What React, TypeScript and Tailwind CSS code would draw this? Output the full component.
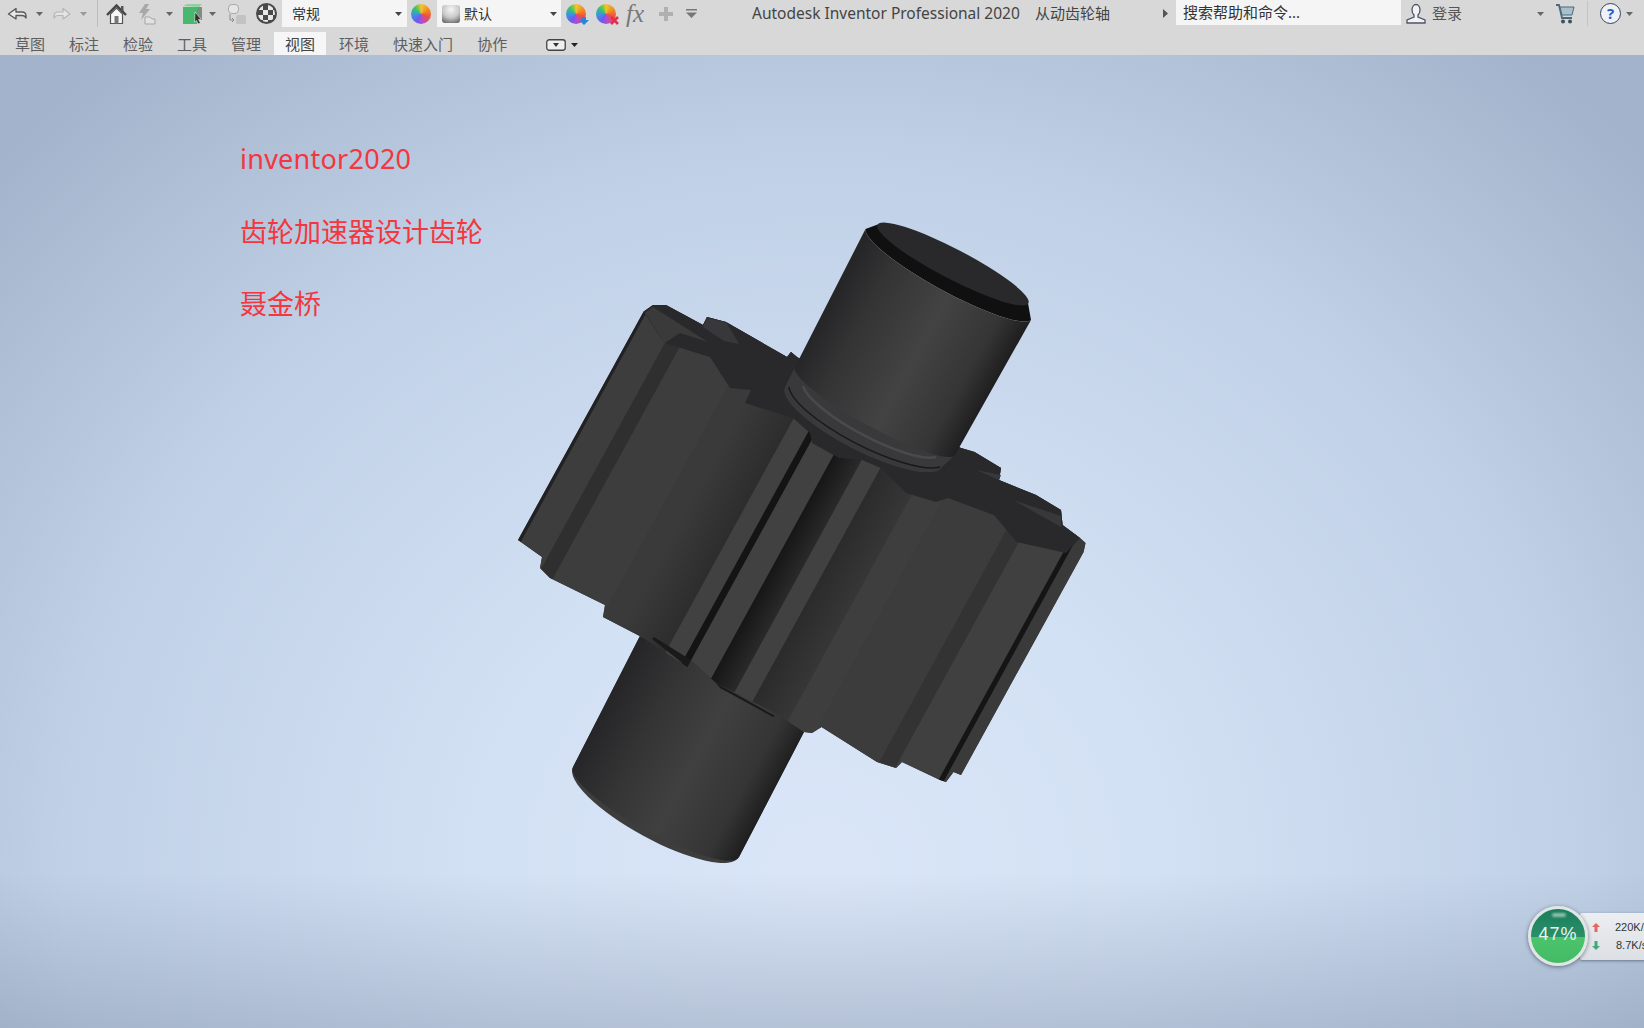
import type { ReactNode } from "react";

const FONT = 'font-["Noto_Sans","Noto_Sans_CJK_SC",sans-serif]';

const tabs = ["草图", "标注", "检验", "工具", "管理", "视图", "环境", "快速入门", "协作"];

function Caret({ className = "" }: { className?: string }) {
  return (
    <svg width="7" height="4" viewBox="0 0 7 4" className={`shrink-0 ${className}`}>
      <path d="M0 0H7L3.5 4Z" fill="currentColor" />
    </svg>
  );
}

function Icon({ w = 20, className = "", children }: { w?: number; className?: string; children: ReactNode }) {
  return (
    <svg width={w} height="22" viewBox={`0 0 ${w} 22`} fill="none" className={`shrink-0 ${className}`}>
      {children}
    </svg>
  );
}

function Wheel({ className = "" }: { className?: string }) {
  return (
    <span
      className={`block h-[20px] w-[20px] shrink-0 rounded-full bg-[conic-gradient(#f4c430_0deg,#f08a24_60deg,#ef4f3c_110deg,#b44ad0_170deg,#6a5cf0_215deg,#3f8ee8_260deg,#35c07a_310deg,#8cc83c_340deg,#f4c430_360deg)] ${className}`}
    />
  );
}

function TitleBar() {
  return (
    <div className="flex h-[27px] items-center text-[#555]">
      {/* quick access */}
      <Icon className="ml-[7px]">
        <path d="M1.500 11 9 5.500v3.500h6q4 0 4 4v2q-1-2.500-4-2.500H9v3.500Z" fill="#e8e8e8" stroke="#5a5a5a" strokeWidth="1.400" strokeLinejoin="round" />
      </Icon>
      <Caret className="ml-[9px] text-[#666]" />
      <Icon className="ml-[9px]">
        <path d="M18 11 11 5.500v3.500H6q-4 0-4 4v2q1-2.500 4-2.500h5v3.500Z" fill="#e4e4e4" stroke="#b5b5b5" strokeWidth="1.200" strokeLinejoin="round" />
      </Icon>
      <Caret className="ml-[8px] text-[#999]" />
      <div className="ml-[10px] h-[27px] w-px bg-[#bdbdbd]" />
      <Icon w={21} className="ml-[8px]">
        <path d="M1 12 10.500 2.500 20 12" stroke="#444" strokeWidth="2.400" />
        <path d="M4.500 11v9.500h12V11l-6-6Z" fill="#f6f6f6" stroke="#555" strokeWidth="1.200" />
        <rect x="8.500" y="13" width="4" height="7.500" fill="#777" />
        <rect x="15" y="3" width="2.500" height="5" fill="#555" />
      </Icon>
      <Icon className="ml-[9px]">
        <path d="M9 1 3 10h4l-2 7 9-11h-4l3-5Z" fill="#a8a8a8" />
        <path d="M9 14h5l2 2h3v5H9Z" fill="#e2e2e2" stroke="#a5a5a5" />
      </Icon>
      <Caret className="ml-[10px] text-[#666]" />
      <Icon className="ml-[9px]">
        <path d="M1 3 5 1h15l-3 3Z" fill="#8fd0a0" />
        <rect x="1" y="4" width="14" height="17" fill="#48b96c" />
        <path d="M15 4h5v13h-5Z" fill="#7a8f80" />
        <path d="m13 9 6 7-2.500.5 2 3.500-2.500 1-1.500-3.500-2 1.500Z" fill="#333" stroke="#eee" strokeWidth=".6" />
      </Icon>
      <Caret className="ml-[7px] text-[#666]" />
      <Icon className="ml-[11px]">
        <rect x="1.500" y="1.500" width="10" height="9" rx="3.500" fill="#e6e6e6" stroke="#a9a9a9" />
        <path d="M3 11v6h4M5 15l2 2-2 2" stroke="#8a8a8a" />
        <rect x="9" y="12" width="10" height="9" rx="1.500" fill="#c2c2c2" />
      </Icon>
      <span className="ml-[9px] block h-[21px] w-[21px] shrink-0 rounded-full border-2 border-[#4a4a4a] bg-[conic-gradient(#4a4a4a_25%,#e8e8e8_0_50%,#4a4a4a_0_75%,#e8e8e8_0)] bg-[length:10px_10px]" />

      {/* style dropdowns */}
      <div className="ml-[5px] flex h-[27px] w-[125px] items-center justify-between bg-[#f5f5f5] pl-[10px] pr-[5px] text-[14px] text-[#333]">
        常规
        <Caret className="text-[#444]" />
      </div>
      <Wheel className="ml-[4px]" />
      <div className="ml-[6px] flex h-[27px] w-[124px] items-center bg-[#f5f5f5] pl-[5px] pr-[4px] text-[14px] text-[#333]">
        <span className="block h-[18px] w-[18px] shrink-0 rounded-[3px] bg-[radial-gradient(circle_at_50%_25%,#f5f5f5_0%,#c9c9c9_50%,#555_100%)]" />
        <span className="ml-[4px] flex-1">默认</span>
        <Caret className="text-[#444]" />
      </div>
      <div className="relative ml-[5px]">
        <Wheel />
        <svg width="10" height="8" viewBox="0 0 10 8" className="absolute -bottom-[1px] -right-[3px]">
          <path d="M3 0h4v3h3L5 8 0 3h3Z" fill="#2a84d8" />
        </svg>
      </div>
      <div className="relative ml-[10px]">
        <Wheel />
        <svg width="9" height="9" viewBox="0 0 9 9" className="absolute -bottom-[1px] -right-[3px]">
          <path d="m1 1 7 7M8 1 1 8" stroke="#ea2c4a" strokeWidth="2.600" />
        </svg>
      </div>
      <span className="ml-[10px] w-[20px] shrink-0 whitespace-nowrap text-[25px] italic leading-none font-['Liberation_Serif',serif] text-[#777]">fx</span>
      <svg width="16" height="16" viewBox="0 0 16 16" className="ml-[12px] shrink-0">
        <path d="M6 1h4v5h5v4h-5v5H6v-5H1V6h5Z" fill="#b0b0b0" />
      </svg>
      <svg width="11" height="9" viewBox="0 0 11 9" className="ml-[12px] shrink-0">
        <path d="M0 0h11v1.500H0Z M0 3.500h11L5.500 9Z" fill="#777" />
      </svg>

      {/* title */}
      <span className="ml-[55px] w-[283px] shrink-0 whitespace-nowrap text-[15.500px] text-[#444]">Autodesk Inventor Professional 2020</span>
      <span className="w-[128px] shrink-0 text-[15px] text-[#444]">从动齿轮轴</span>
      <svg width="5" height="9" viewBox="0 0 5 9" className="shrink-0">
        <path d="M0 0l5 4.500L0 9Z" fill="#555" />
      </svg>

      {/* search + account */}
      <div className="ml-[8px] flex h-[25px] w-[225px] shrink-0 items-center self-start bg-[#f5f5f5] pl-[7px] text-[15px] text-[#333]">搜索帮助和命令...</div>
      <Icon className="ml-[5px]">
        <path d="M6 7a4 5.500 0 1 1 8 0q0 3-2 5v2l7 3v3H1v-3l7-3v-2q-2-2-2-5Z" fill="#f2f2f2" stroke="#4b5468" strokeWidth="1.300" />
      </Icon>
      <span className="ml-[6px] w-[105px] shrink-0 text-[15px] text-[#555]">登录</span>
      <Caret className="text-[#666]" />
      <Icon className="ml-[11px]">
        <path d="M1 2h3l3 13h10" stroke="#4a6a7c" strokeWidth="1.800" />
        <path d="M5 4h14l-2 8H7Z" fill="#a9bfcb" stroke="#4a6a7c" />
        <circle cx="8" cy="18.500" r="2" fill="#39525f" />
        <circle cx="15" cy="18.500" r="2" fill="#39525f" />
      </Icon>
      <div className="ml-[12px] h-[25px] w-px bg-[#c4c4c4]" />
      <span className="ml-[12px] flex h-[21px] w-[21px] shrink-0 items-center justify-center rounded-full border-[1.500px] border-[#39415c] bg-[#eef1f7] text-[15px] font-bold leading-none text-[#2a5fc4]">?</span>
      <Caret className="ml-[5px] text-[#666]" />
    </div>
  );
}

function TabBar() {
  return (
    <div className="flex h-[28px] items-end gap-[2px] pl-[4px] text-[15px] text-[#5e5e5e]">
      {tabs.map((t) => (
        <div key={t} className={`flex h-[23px] items-center px-[11px] pt-[1px] ${t === "视图" ? "bg-[#f6f6f6] text-[#444]" : ""}`}>
          {t}
        </div>
      ))}
      <div className="mb-[4px] ml-[26px] flex items-center gap-[5px]">
        <svg width="20" height="12" viewBox="0 0 20 12">
          <rect x=".75" y=".75" width="18.500" height="10.500" rx="2.500" fill="#efefef" stroke="#444" strokeWidth="1.300" />
          <path d="M7 4h6l-3 4Z" fill="#333" />
        </svg>
        <Caret className="text-[#222]" />
      </div>
    </div>
  );
}

const DX = -0.548;

// one tooth facet running along the gear axis, given by its x at y=520
function Strip({ a, b, fill }: { a: number; b: number; fill: string }) {
  const at = (x: number, y: number) => `${x + DX * (y - 520)},${y}`;
  return <polygon points={`${at(a, 280)} ${at(b, 280)} ${at(b, 800)} ${at(a, 800)}`} fill={fill} />;
}

const gearBody =
  "518,540 643.500,311.700 653,305 666,305 703,325 707,317 726,322 787,357 791,352 797,357 900,420 961,448 974.500,452 1001,468 999,480 1036,495 1061,510 1062.600,525 1080,538 1085.500,543 1083.600,552 961,775 953.500,772 946,782 940,780 902,762 896,768 877,762 821.500,727 812,733 804,732 775.500,713 716,683 691,660 687.500,667 643.500,638 603,617 605,605 550,578 540,568 542,557";

function Gear() {
  return (
    <svg width="1644" height="973" viewBox="0 55 1644 973" className="absolute left-0 top-0">
      <defs>
        <linearGradient id="upper" gradientUnits="userSpaceOnUse" x1="795" y1="367" x2="955" y2="455">
          <stop offset="0" stopColor="#262628" />
          <stop offset=".2" stopColor="#343435" />
          <stop offset=".55" stopColor="#434344" />
          <stop offset=".85" stopColor="#353536" />
          <stop offset="1" stopColor="#1f1f20" />
        </linearGradient>
        <linearGradient id="lower" gradientUnits="userSpaceOnUse" x1="573" y1="767" x2="739" y2="857">
          <stop offset="0" stopColor="#262628" />
          <stop offset=".25" stopColor="#343435" />
          <stop offset=".55" stopColor="#404041" />
          <stop offset=".85" stopColor="#353536" />
          <stop offset="1" stopColor="#1e1e1f" />
        </linearGradient>
        <linearGradient id="rootA" gradientUnits="userSpaceOnUse" x1="681" y1="520" x2="738" y2="551">
          <stop offset="0" stopColor="#3a3a3b" />
          <stop offset="1" stopColor="#29292a" />
        </linearGradient>
        <linearGradient id="rootB" gradientUnits="userSpaceOnUse" x1="798" y1="520" x2="829" y2="537">
          <stop offset="0" stopColor="#161617" />
          <stop offset="1" stopColor="#303031" />
        </linearGradient>
        <linearGradient id="rootC" gradientUnits="userSpaceOnUse" x1="852" y1="520" x2="898" y2="545">
          <stop offset="0" stopColor="#2b2b2c" />
          <stop offset="1" stopColor="#3a3a3b" />
        </linearGradient>
        <clipPath id="body">
          <polygon points={gearBody} />
        </clipPath>
      </defs>

      {/* lower shaft */}
      <path d="M643,630 L720,650 L804,732 L739,857 A94.400,27,28.500,0,1,573,767 Z" fill="#3d3d3e" />
      <path d="M643,630 L720,650 L804,732 L739,857 A94.400,21,28.500,0,1,573,767 Z" fill="url(#lower)" />

      {/* gear teeth */}
      <polygon points={gearBody} fill="#3a3a3b" />
      <g clipPath="url(#body)">
        <Strip a={525} b={533} fill="#222224" />
        <Strip a={533} b={568} fill="#3d3d3e" />
        <Strip a={568} b={585} fill="#2f2f30" />
        <Strip a={585} b={655} fill="#3d3d3e" />
        <Strip a={655} b={681} fill="#3a3a3b" />
        <Strip a={681} b={738} fill="url(#rootA)" />
        <Strip a={738} b={760} fill="#414142" />
        <Strip a={760} b={768} fill="#141415" />
        <Strip a={768} b={798} fill="#414142" />
        <Strip a={798} b={829} fill="url(#rootB)" />
        <Strip a={829} b={852} fill="#414142" />
        <Strip a={852} b={898} fill="url(#rootC)" />
        <Strip a={898} b={932} fill="#3e3e3f" />
        <Strip a={932} b={1012} fill="#3c3c3d" />
        <Strip a={1012} b={1031} fill="#333334" />
        <Strip a={1031} b={1081} fill="#404041" />
        <Strip a={1081} b={1087} fill="#151516" />
        <Strip a={1087} b={1110} fill="#3a3a3b" />
      </g>
      <polygon points="687.500,667 691,660 654,637 652,639" fill="#1a1a1b" />
      <polygon points="716,683 775,716 773,717 720,688" fill="#1a1a1b" />

      {/* end face */}
      <polygon
        points="643.500,311.700 653,305 666,305 703,325 707,317 726,322 787,357 791,352 797,357 900,420 961,448 974.500,452 1001,468 999,480 1036,495 1061,510 1062.600,525 1080,538 1066,553 1016.600,542 994,515 948,498 936,502 906,493 881,468 862,460 839,458 812,443 810,433 793,418 745,403 751,390 730,388 710,357 664.600,343"
        fill="#29292c"
      />
      <polygon points="645,313 653,307 708,342 680,333 664.600,343" fill="#3a3a3b" />
      <polygon points="707,318 726,322 739,344 724,341 703,327" fill="#38383a" />
      <polygon points="1013,500 1061,516 1061,527 1036,513" fill="#38383a" />
      <polygon points="976,470 1001,475 999,480" fill="#38383a" />

      {/* collar */}
      <path d="M795,367 L955,455 L942,467 A88,24,27,0,1,785,387 Z" fill="#39393b" />
      <path d="M803,386 A78,20,28,0,0,936,457" fill="none" stroke="#4a4a4b" strokeWidth="2.500" />
      <path d="M789,387 A88,24,27,0,0,940,467" fill="none" stroke="#19191a" strokeWidth="1.500" />

      {/* upper shaft */}
      <path d="M865.500,229 L879,224 L898,226 L959,255 L1013,285 L1028,303 L1031,320 A94.700,18,28.700,0,1,865.500,229 Z" fill="#101011" />
      <ellipse cx="953" cy="264" rx="85" ry="15" transform="rotate(27.500 953 264)" fill="#29292c" />
      <path d="M865.500,229 A94.700,18,28.700,0,0,1031,320 L955,455 A91,16,28.700,0,1,795,367 Z" fill="url(#upper)" />
    </svg>
  );
}

function SpeedBall() {
  return (
    <div className="absolute left-[1528px] top-[906px] flex items-center">
      <div className="relative z-10 flex h-[60px] w-[60px] shrink-0 items-center justify-center overflow-hidden rounded-full border-[3px] border-[#dfe6e4] bg-[linear-gradient(#1a7d5c_0%,#2a9069_52%,#4cc46c_52%,#43bb66_100%)] shadow-[0_1px_4px_rgba(40,50,70,.6)]">
        <span className="absolute left-[21px] top-[4px] h-[4px] w-[14px] rounded-full bg-white/50 blur-[1px]" />
        <span className="-mt-[4px] font-['Liberation_Sans',sans-serif] text-[18px] leading-none tracking-[1px] text-[#e6f5ec]">47%</span>
      </div>
      <div className="-ml-[8px] flex h-[47px] w-[100px] shrink-0 flex-col justify-center gap-[3px] rounded-l-[2px] bg-[linear-gradient(#eceef1,#dcdfe4)] pl-[12px] font-['Liberation_Sans',sans-serif] text-[11px] leading-[15px] text-[#333] shadow-[0_1px_3px_rgba(40,50,70,.5)]">
        <div className="flex items-center whitespace-nowrap">
          <svg width="8" height="9" viewBox="0 0 8 9" className="shrink-0">
            <path d="M4 0 8 4H5.500V9h-3V4H0Z" fill="#e2685f" />
          </svg>
          <span className="ml-[15px]">220K/s</span>
        </div>
        <div className="flex items-center whitespace-nowrap">
          <svg width="8" height="9" viewBox="0 0 8 9" className="shrink-0">
            <path d="M4 9 8 5H5.500V0h-3v5H0Z" fill="#45a878" />
          </svg>
          <span className="ml-[16px]">8.7K/s</span>
        </div>
      </div>
    </div>
  );
}

export default function App() {
  return (
    <div className={`relative flex h-[1028px] w-[1644px] flex-col overflow-hidden ${FONT}`}>
      <header className="h-[55px] shrink-0 bg-[#d8d8d8]">
        <TitleBar />
        <TabBar />
      </header>
      <main className="relative flex-1 bg-[#d8e5f7]">
        <div className="absolute inset-0 bg-[linear-gradient(transparent_84%,rgba(120,135,160,.36)_100%),radial-gradient(ellipse_68%_108%_at_50%_84%,#dae6f8_0%,#d3e1f4_30%,#c0d0e6_68%,#a2b3cb_100%)]" />
        <div className="absolute inset-0">
          <Gear />
        </div>
        <div className="relative flex flex-col gap-[31.500px] pl-[240px] pt-[83px] text-[27px] leading-[41px] text-[#f4363e]">
          <p className="tracking-[.25px]">inventor2020</p>
          <p>齿轮加速器设计齿轮</p>
          <p>聂金桥</p>
        </div>
      </main>
      <SpeedBall />
    </div>
  );
}
